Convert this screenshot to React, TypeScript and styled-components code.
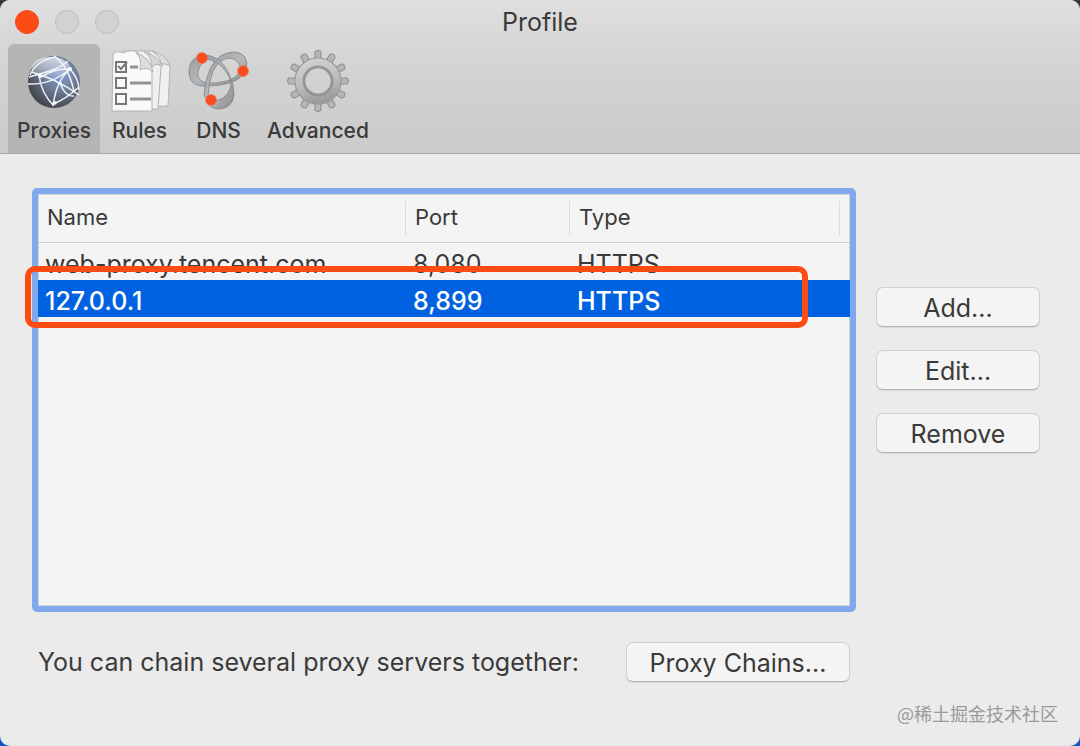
import React from "react";
import styled, { createGlobalStyle } from "styled-components";

const GlobalStyle = createGlobalStyle`
  *, *::before, *::after { box-sizing: border-box; }
  body {
    margin: 0;
    background: linear-gradient(#3a3840, #3a3840 30%, #0c58c0);
    font-family: Inter, "Liberation Sans", "Noto Sans CJK SC", sans-serif;
    font-weight: 400;
    color: #3a3a3a;
  }
`;

const Window = styled.div`
  position: relative;
  min-height: 100vh;
  border-radius: 10px;
  overflow: hidden;
  background: #ebebeb;
  display: flex;
  flex-direction: column;
`;

const Header = styled.header`
  background: linear-gradient(#dfdfdf, #d3d3d3 45%, #cbcbcb);
  border-bottom: 1px solid #a9a9a9;
`;

const TitleBar = styled.div`
  display: grid;
  grid-template-columns: 1fr auto 1fr;
  align-items: center;
  height: 44px;
  padding: 0 15px;
`;

const Lights = styled.div`
  display: flex;
  gap: 16px;
`;

const Light = styled.button<{ $active?: boolean }>`
  width: 24px;
  height: 24px;
  padding: 0;
  border-radius: 50%;
  border: 1px solid ${(p) => (p.$active ? "#ee4a1c" : "#bcbcbc")};
  background: ${(p) => (p.$active ? "#fc4c16" : "#d2d2d2")};
`;

const Title = styled.h1`
  margin: 0;
  font-size: 25px;
  line-height: 32px;
  font-weight: 400;
`;

const Toolbar = styled.nav`
  display: flex;
  padding: 0 8px;
`;

const Tool = styled.button<{ $selected?: boolean }>`
  display: flex;
  flex-direction: column;
  align-items: center;
  min-width: 79px;
  height: 109px;
  padding: 6px 9px 0;
  border: 0;
  border-radius: 6px 6px 0 0;
  background: ${(p) => (p.$selected ? "#b5b5b6" : "transparent")};
  color: inherit;
  font: 500 21px/28px Inter, "Liberation Sans", sans-serif;

  svg { display: block; flex: none; width: 64px; height: 64px; margin: 0 -2px 3px; }
`;

const Content = styled.main`
  display: grid;
  grid-template-columns: minmax(0, 1fr) 164px;
  gap: 30px 20px;
  padding: 34px 40px 32px 32px;
`;

const ListBox = styled.div`
  position: relative;
  min-height: 424px;
  border: 6px solid #80a9ec;
  border-radius: 5px;
  background: #f4f4f4;
  box-shadow: inset 0 0 0 1px #d3d3d8;
`;

const Table = styled.table`
  width: 100%;
  border-collapse: collapse;
  table-layout: fixed;
  text-align: left;
`;

const HeadCell = styled.th<{ $width?: string }>`
  width: ${(p) => p.$width ?? "auto"};
  height: 48px;
  padding: 0 9px 2px;
  border-bottom: 1px solid #cccccc;
  font-size: 22px;
  line-height: 28px;
  font-weight: 400;
  background: linear-gradient(#dcdcdc, #dcdcdc) right 0 center / 1px 34px no-repeat;

  &:last-child { background-position: right 10px center; }
`;

const Row = styled.tr<{ $selected?: boolean }>`
  background: ${(p) => (p.$selected ? "#0062e1" : "transparent")};
  color: ${(p) => (p.$selected ? "#ffffff" : "inherit")};
  font-weight: ${(p) => (p.$selected ? 500 : 400)};
`;

const Cell = styled.td`
  height: 37px;
  padding: 5px 7px 0;
  font-size: 25px;
  line-height: 32px;
  white-space: nowrap;
`;

const Highlight = styled.div`
  position: absolute;
  top: 72px;
  left: -13px;
  right: 42px;
  height: 62px;
  border: 6px solid #fd4b14;
  border-radius: 10px;
  pointer-events: none;
`;

const PushButton = styled.button<{ $wide?: boolean }>`
  width: ${(p) => (p.$wide ? "224px" : "100%")};
  height: 40px;
  padding: 2px 0 0;
  border: 1px solid #cfcfcf;
  border-bottom-color: #b4b4b4;
  border-radius: 7px;
  background: #f4f4f4;
  box-shadow: 0 1px 1px rgba(0, 0, 0, 0.08);
  color: inherit;
  font: 400 25px/32px Inter, "Liberation Sans", sans-serif;
`;

const Actions = styled.div`
  display: flex;
  flex-direction: column;
  gap: 23px;
  padding-top: 99px;
`;

const ChainRow = styled.div`
  display: flex;
  align-items: center;
  justify-content: space-between;
  padding: 0 6px;
`;

const ChainText = styled.p`
  margin: 0;
  font-size: 25px;
  line-height: 32px;
  white-space: nowrap;
`;

const Watermark = styled.footer`
  position: absolute;
  right: 22px;
  bottom: 21px;
  font: 400 18px/24px "Noto Sans CJK SC", sans-serif;
  color: #9a9a9a;
`;

function GlobeIcon() {
  return (
    <svg viewBox="0 0 64 64" aria-hidden="true">
      <defs>
        <radialGradient id="globe" cx="62%" cy="35%" r="66%">
          <stop offset="0" stopColor="#7f9dd2" />
          <stop offset="0.45" stopColor="#71809b" />
          <stop offset="1" stopColor="#45474d" />
        </radialGradient>
        <linearGradient id="globeShine" x1="0" y1="0" x2="0" y2="1">
          <stop offset="0" stopColor="#fff" stopOpacity="0.7" />
          <stop offset="1" stopColor="#fff" stopOpacity="0.1" />
        </linearGradient>
      </defs>
      <circle cx="32" cy="32" r="26" fill="url(#globe)" />
      <ellipse cx="29" cy="18" rx="19" ry="11" fill="url(#globeShine)" />
      <g fill="none" stroke="#eef3fb" strokeWidth="1.5">
        <path d="M7 27q15-4 26-8 8-3 13-8M9 22q24 6 48 23M17 25q2 18 15 31M6 34q24 1 42-15M32 6q14 9 20 35M33 7Q15 10 8 25M48 19Q34 31 31 56M48 19q9 10 9 21M19 27q14-9 29-8M31 54q13-5 26-17M38 33q5 14 14 13" />
      </g>
      <g fill="#fff">
        <circle cx="18" cy="26" r="2" /><circle cx="48" cy="19" r="2" />
        <circle cx="38" cy="33" r="1.6" /><circle cx="33" cy="53" r="1.8" />
      </g>
    </svg>
  );
}

function RulesIcon() {
  return (
    <svg viewBox="0 0 64 64" aria-hidden="true">
      <g fill="#f0f0f0" stroke="#b2b2b2">
        <path d="M22 2l22-1 18 15-2 40-35 1z" />
        <path d="M14 1h26l13 16-3 42H15z" />
        <path d="M5 4q4-4 10-1 8-4 14-1l15 19v40H4z" fill="#f9f9f9" />
        <path d="M28 3q6 4 4 17 6-4 13 2-2-14-17-19z" fill="#dddddd" />
        <path d="M36 2q8 4 8 15 5-5 11-1-6-11-19-14z" fill="#d5d5d5" />
        <path d="M44 1q8 4 9 13 4-1 9 2-4-12-18-15z" fill="#dddddd" />
      </g>
      <g fill="none" stroke="#777" strokeWidth="2">
        <path d="M8 12h10v10H8zM8 28h10v10H8zM8 44h10v10H8z" />
        <path d="M10 16l3 3 6-7" />
      </g>
      <path d="M22 17h8M22 33h21M22 49h21" stroke="#929292" strokeWidth="3" />
    </svg>
  );
}

function DnsIcon() {
  return (
    <svg viewBox="0 0 64 64" aria-hidden="true">
      <defs>
        <linearGradient id="loop" x1="0" y1="0" x2="1" y2="1">
          <stop offset="0" stopColor="#9b9ea0" />
          <stop offset="0.5" stopColor="#b5b8ba" />
          <stop offset="1" stopColor="#8a8d8f" />
        </linearGradient>
      </defs>
      <g fill="url(#loop)" fillRule="evenodd" stroke="#7f8284" strokeWidth="0.8">
        <path d="M13 6C2 9 0 21 4 30q3 6 14 6 14 0 25-3 11-4 16-12l-4-2q-5 9-15 12-11 3-20 2-7-1-9-7-1-7 5-14z" />
        <path d="M59 21Q63 3 47 2 31 3 24 17q-6 13-7 29l4 2q0-14 5-27Q33 8 43 8q9 1 11 12z" />
        <path d="M18 5q15 1 23 17 6 11 6 22-1 14-15 15-8 0-12-7l4-4q3 4 8 2 8-3 11-11 3-7-3-16Q31 9 17 9z" />
      </g>
      <g fill="#f94d1c" stroke="#d98268" strokeWidth="0.7">
        <circle cx="15" cy="8" r="5.5" /><circle cx="56" cy="21" r="5.5" /><circle cx="24" cy="50" r="5.5" />
      </g>
    </svg>
  );
}

function GearIcon() {
  const teeth = Array.from({ length: 12 }, (_, i) => i * 30);
  return (
    <svg viewBox="0 0 64 64" aria-hidden="true">
      <defs>
        <linearGradient id="gear" gradientUnits="userSpaceOnUse" x1="20" y1="0" x2="36" y2="64">
          <stop offset="0" stopColor="#dadbdb" />
          <stop offset="0.5" stopColor="#bbbdbe" />
          <stop offset="1" stopColor="#85878a" />
        </linearGradient>
        <mask id="gearHole">
          <path fill="#fff" d="M0 0h64v64H0z" />
          <circle cx="32" cy="31" r="12.5" fill="#000" />
        </mask>
      </defs>
      <g mask="url(#gearHole)">
        <g fill="#b4b6b7" stroke="#939596" strokeWidth="1.2">
          {teeth.map((angle) => (
            <path key={angle} transform={`rotate(${angle} 32 31)`} d="M26 11l3-3V2q3-3 6 0v6l3 3z" />
          ))}
          <circle cx="32" cy="31" r="23" />
        </g>
        <circle cx="32" cy="31" r="22.5" fill="url(#gear)" />
        <circle cx="32" cy="31" r="14" fill="none" stroke="#939596" strokeWidth="3" />
      </g>
    </svg>
  );
}

const tools = [
  { label: "Proxies", Icon: GlobeIcon },
  { label: "Rules", Icon: RulesIcon },
  { label: "DNS", Icon: DnsIcon },
  { label: "Advanced", Icon: GearIcon },
];

const proxies = [
  { name: "web-proxy.tencent.com", port: "8,080", type: "HTTPS" },
  { name: "127.0.0.1", port: "8,899", type: "HTTPS", selected: true },
];

export default function App() {
  return (
    <>
      <GlobalStyle />
      <Window>
        <Header>
          <TitleBar>
            <Lights>
              <Light $active aria-label="Close" />
              <Light aria-label="Minimize" />
              <Light aria-label="Zoom" />
            </Lights>
            <Title>Profile</Title>
          </TitleBar>
          <Toolbar>
            {tools.map(({ label, Icon }, i) => (
              <Tool key={label} $selected={i === 0}>
                <Icon />
                {label}
              </Tool>
            ))}
          </Toolbar>
        </Header>
        <Content>
          <ListBox>
            <Table>
              <thead>
                <tr>
                  <HeadCell $width="368px">Name</HeadCell>
                  <HeadCell $width="164px">Port</HeadCell>
                  <HeadCell>Type</HeadCell>
                </tr>
              </thead>
              <tbody>
                {proxies.map((proxy) => (
                  <Row key={proxy.name} $selected={proxy.selected}>
                    <Cell>{proxy.name}</Cell>
                    <Cell>{proxy.port}</Cell>
                    <Cell>{proxy.type}</Cell>
                  </Row>
                ))}
              </tbody>
            </Table>
            <Highlight />
          </ListBox>
          <Actions>
            <PushButton>Add...</PushButton>
            <PushButton>Edit...</PushButton>
            <PushButton>Remove</PushButton>
          </Actions>
          <ChainRow>
            <ChainText>You can chain several proxy servers together:</ChainText>
            <PushButton $wide>Proxy Chains...</PushButton>
          </ChainRow>
        </Content>
        <Watermark>@稀土掘金技术社区</Watermark>
      </Window>
    </>
  );
}
